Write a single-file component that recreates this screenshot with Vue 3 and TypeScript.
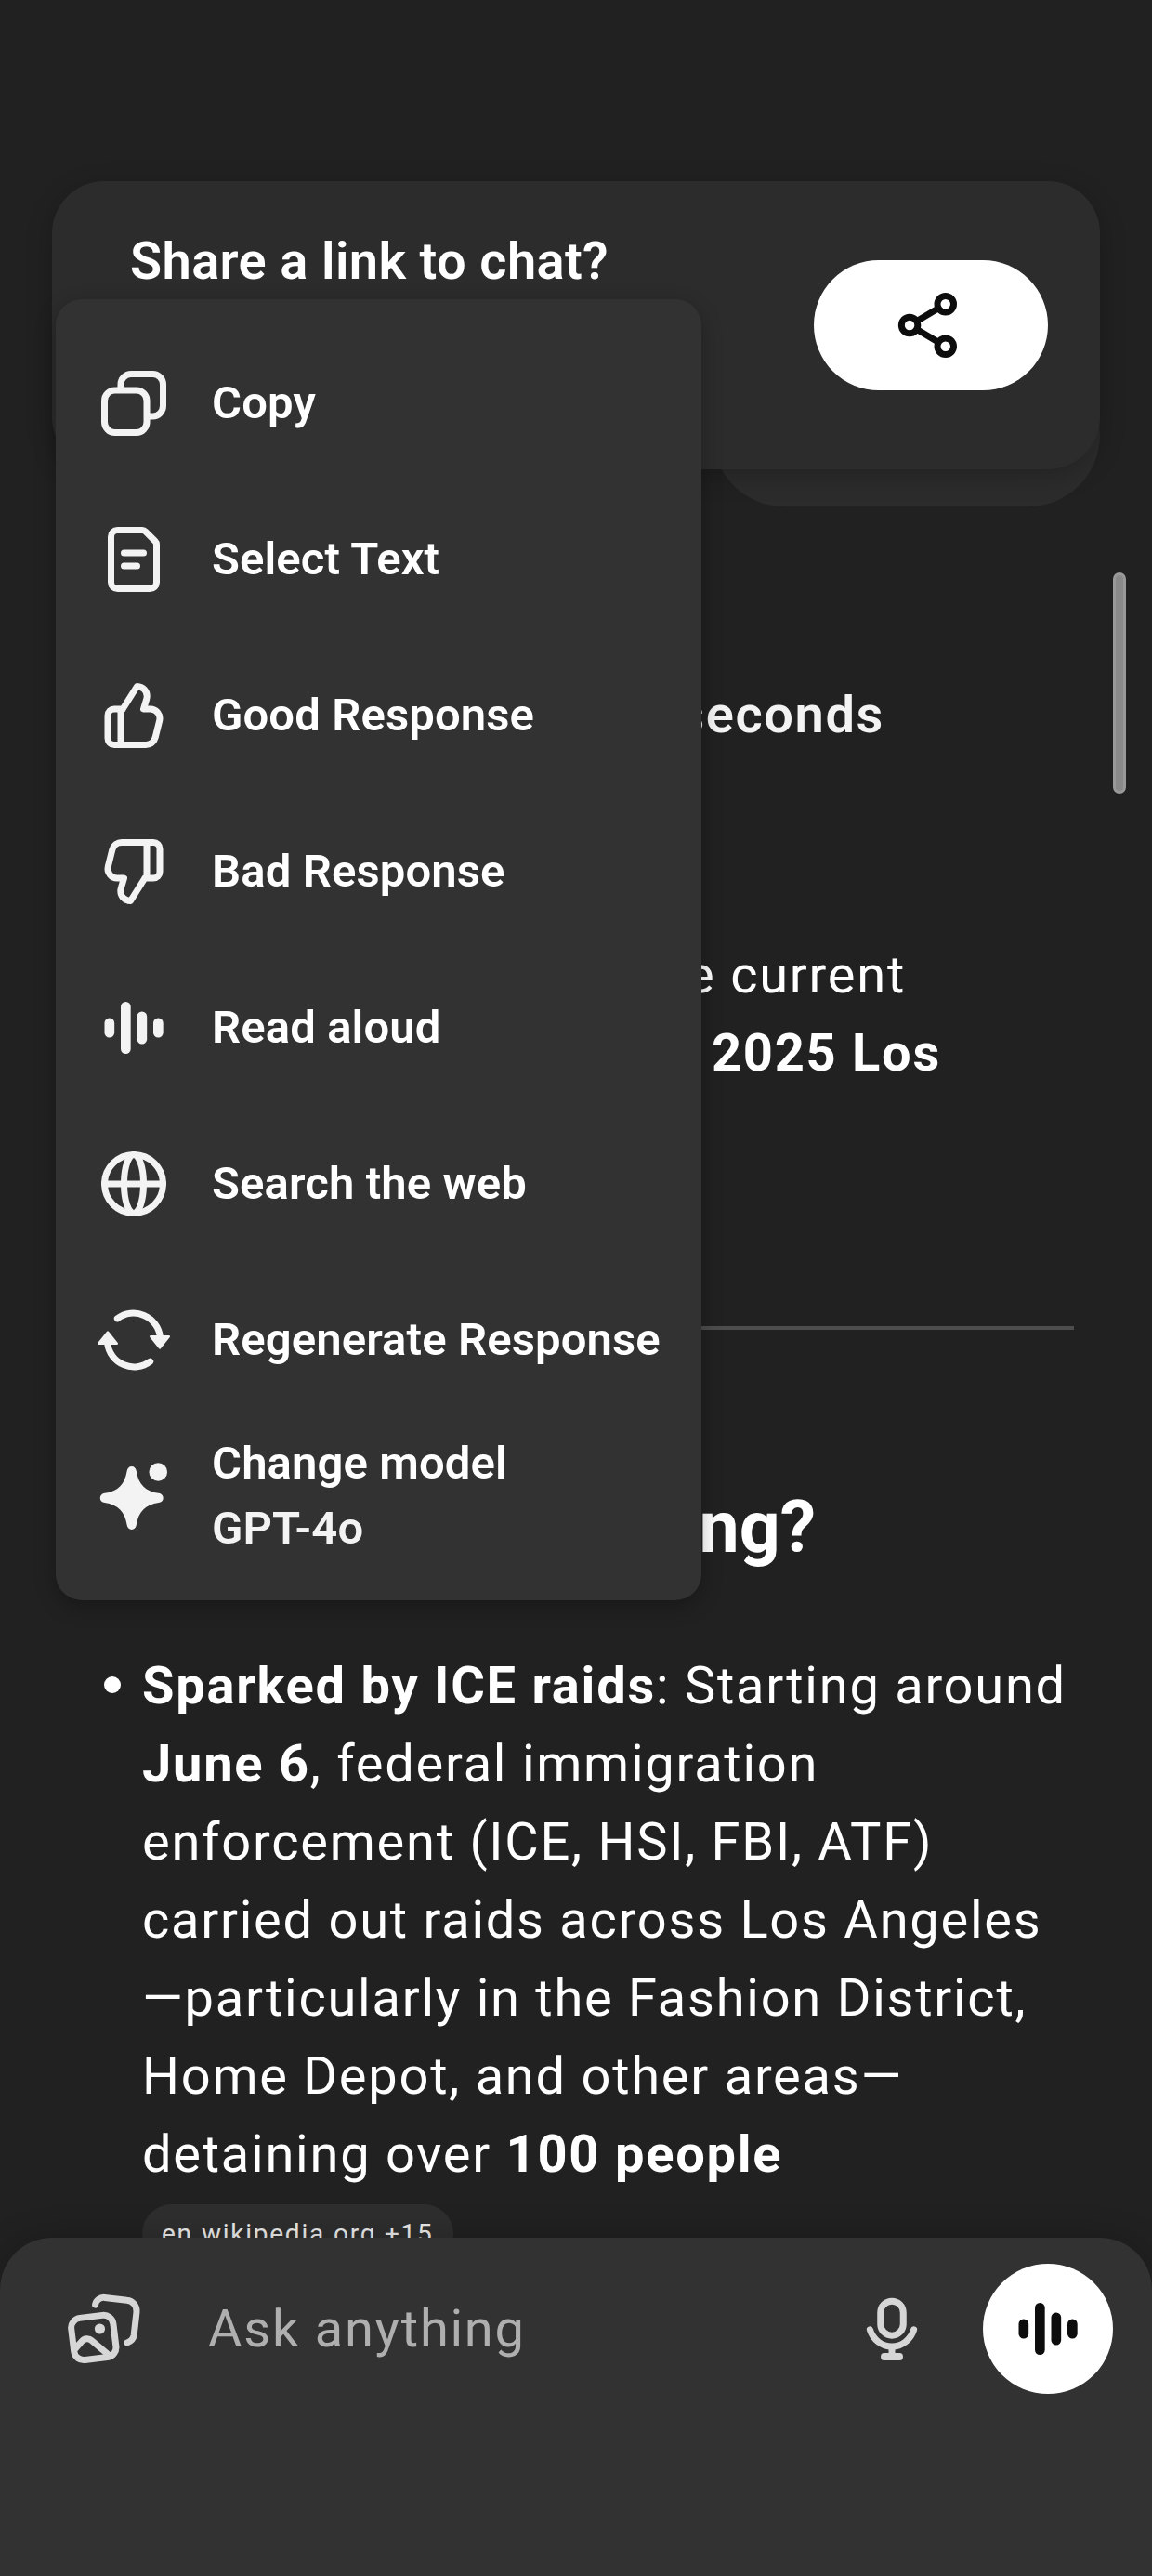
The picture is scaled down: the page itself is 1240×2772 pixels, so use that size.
<script setup lang="ts">
type IconName = 'copy' | 'doc' | 'up' | 'down' | 'wave' | 'globe' | 'regen' | 'spark'

interface MenuItem {
  icon: IconName
  label: string
  detail?: string
}

const items: MenuItem[] = [
  { icon: 'copy', label: 'Copy' },
  { icon: 'doc', label: 'Select Text' },
  { icon: 'up', label: 'Good Response' },
  { icon: 'down', label: 'Bad Response' },
  { icon: 'wave', label: 'Read aloud' },
  { icon: 'globe', label: 'Search the web' },
  { icon: 'regen', label: 'Regenerate Response' },
  { icon: 'spark', label: 'Change model', detail: 'GPT-4o' },
]

const bars = [
  { x: 3, y: 9, h: 6 },
  { x: 8, y: 4, h: 16 },
  { x: 13, y: 7, h: 10 },
  { x: 18, y: 9, h: 6 },
]

const thumb =
  'M8 21V10.4M8.6 10L13 3c1.8.1 3.05 1.4 3.05 3 0 .4-.05.7-.15 1L15 10h2.1a2.9 2.9 0 0 1 2.8 3.6l-1.3 5.2A3 3 0 0 1 15.7 21H6a2 2 0 0 1-2-2v-7a2 2 0 0 1 2-2h2.6'
</script>

<template>
  <div class="screen">
    <main class="chat">
      <div class="bubble"></div>
      <p class="thought">seconds</p>
      <div class="intro">
        <p class="l1">the current</p>
        <p class="l2"><b>2025 Los</b></p>
      </div>
      <div class="rule"></div>
      <h2>happening?</h2>
      <div class="bullet">
        <span class="dot"></span>
        <div class="body">
          <p>
            <b>Sparked by ICE raids</b>: Starting around<br />
            <b>June 6</b>, federal immigration<br />
            enforcement (ICE, HSI, FBI, ATF)<br />
            carried out raids across Los Angeles<br />
            —particularly in the Fashion District,<br />
            Home Depot, and other areas—<br />
            detaining over <b>100 people</b>
          </p>
          <span class="chip">en.wikipedia.org +15</span>
        </div>
      </div>
    </main>

    <div class="scrollbar"></div>

    <section class="share">
      <h1>Share a link to chat?</h1>
      <button class="share-btn">
        <svg class="icon line" viewBox="0 0 24 24">
          <circle cx="5.45" cy="12" r="2.5" />
          <circle cx="16.5" cy="5.5" r="2.5" />
          <circle cx="16.5" cy="18.5" r="2.5" />
          <path d="M7.7 10.7l6.6-3.9M7.7 13.3l6.6 3.9" stroke-linecap="butt" />
        </svg>
      </button>
    </section>

    <nav class="menu">
      <div v-for="item in items" :key="item.label" class="row">
        <svg class="icon line" viewBox="0 0 24 24">
          <template v-if="item.icon === 'copy'">
            <rect x="3" y="8" width="13" height="13" rx="3.2" />
            <path d="M8 7.5V6.2A3.2 3.2 0 0 1 11.2 3h6.6A3.2 3.2 0 0 1 21 6.2v6.6a3.2 3.2 0 0 1-3.2 3.2h-1.3" />
          </template>
          <template v-else-if="item.icon === 'doc'">
            <path d="M7 3h7.6a1.5 1.5 0 0 1 1.05.45l2.9 2.9A1.5 1.5 0 0 1 19 7.4V19a2 2 0 0 1-2 2H7a2 2 0 0 1-2-2V5a2 2 0 0 1 2-2z" />
            <path d="M9 10h6M9 14h4" />
          </template>
          <path v-else-if="item.icon === 'up'" :d="thumb" />
          <path v-else-if="item.icon === 'down'" :d="thumb" transform="rotate(180 12 12)" />
          <g v-else-if="item.icon === 'wave'" class="solid">
            <rect v-for="b in bars" :key="b.x" :x="b.x" :y="b.y" width="3.05" :height="b.h" rx="1.5" />
          </g>
          <template v-else-if="item.icon === 'globe'">
            <circle cx="12" cy="12" r="9" />
            <ellipse cx="12" cy="12" rx="3" ry="9" />
            <path d="M3 12h18" />
          </template>
          <template v-else-if="item.icon === 'regen'">
            <path d="M6.95 5.4A8.25 8.25 0 0 1 20.1 11" />
            <path d="M17.05 18.6A8.25 8.25 0 0 1 3.9 13" />
            <path class="tip" d="M17.2 10.9h5.6L20 14.4z" />
            <path class="tip" d="M6.8 13.1H1.2L4 9.6z" />
          </template>
          <g v-else class="solid">
            <circle cx="19.5" cy="4.55" r="2.8" />
            <path
              transform="translate(11.35 12.55)"
              d="M0-9.7C.8-9.7 1.3-9.1 1.45-8.3C2.1-4.2 4.2-2.1 8.3-1.45C9.1-1.3 9.7-.8 9.7 0S9.1 1.3 8.3 1.45C4.2 2.1 2.1 4.2 1.45 8.3C1.3 9.1.8 9.7 0 9.7S-1.3 9.1-1.45 8.3C-2.1 4.2-4.2 2.1-8.3 1.45C-9.1 1.3-9.7.8-9.7 0S-9.1-1.3-8.3-1.45C-4.2-2.1-2.1-4.2-1.45-8.3C-1.3-9.1-.8-9.7 0-9.7z"
            />
          </g>
        </svg>
        <div class="text">
          <span>{{ item.label }}</span>
          <span v-if="item.detail" class="detail">{{ item.detail }}</span>
        </div>
      </div>
    </nav>

    <footer class="composer">
      <svg class="icon line" viewBox="0 0 24 24">
        <rect x="2.3" y="8.2" width="13" height="13" rx="3" transform="rotate(-7 8.8 14.7)" />
        <circle class="solid" cx="10.7" cy="12" r="1.6" />
        <path d="M2.9 18.4l2.3-2.6a2.1 2.1 0 0 1 3-.2l5.4 4.6" stroke-linecap="butt" />
        <path d="M9.3 4.6c.2-1.4 1.5-2.3 2.9-2.2l6.8.8a3.3 3.3 0 0 1 3 3.6l-.8 7.1c-.15 1.1-1 2-2.1 2.4" />
      </svg>
      <span class="placeholder">Ask anything</span>
      <svg class="icon line mic" viewBox="0 0 24 24">
        <rect x="8.5" y="3.5" width="7" height="10.55" rx="3.5" />
        <path d="M5.25 12.25C6.2 15.3 8.9 17.45 12 17.45s5.8-2.15 6.75-5.2" />
        <path d="M12 17.5v3" stroke-linecap="butt" />
        <rect class="solid" x="8.6" y="19.4" width="6.8" height="2.3" rx="1" />
      </svg>
      <button class="voice">
        <svg class="icon line" viewBox="0 0 24 24">
          <g class="solid">
            <rect v-for="b in bars" :key="b.x" :x="b.x" :y="b.y" width="3.05" :height="b.h" rx="1.5" />
          </g>
        </svg>
      </button>
    </footer>
  </div>
</template>

<style>
body {
  margin: 0;
  background: #212121;
}
</style>

<style scoped>
.screen {
  position: relative;
  width: 1240px;
  height: 2772px;
  overflow: hidden;
  background: #212121;
  color: #fff;
  font-family: Roboto, 'Liberation Sans', sans-serif;
  font-size: 56px;
  line-height: 84px;
  letter-spacing: 1.75px;
}
p,
h1,
h2 {
  margin: 0;
  white-space: nowrap;
}
b {
  font-weight: 700;
}
button {
  display: flex;
  align-items: center;
  justify-content: center;
  padding: 0;
  border: 0;
  background: #fff;
  color: #0d0d0d;
}
.icon {
  display: block;
  flex: none;
  width: 84px;
  height: 84px;
}
.line {
  fill: none;
  stroke: currentColor;
  stroke-width: 2;
  stroke-linecap: round;
  stroke-linejoin: round;
}
.solid {
  fill: currentColor;
  stroke: none;
}
.tip {
  fill: currentColor;
  stroke-width: 0.7;
}

.chat {
  display: flex;
  flex-direction: column;
  padding: 391px 56px 0 84px;
}
.bubble {
  align-self: flex-end;
  width: 417px;
  height: 154px;
  border-radius: 77px;
  background: #2c2c2c;
}
.thought {
  width: 868px;
  margin-top: 182px;
  text-align: right;
  font-weight: 600;
  letter-spacing: 1.6px;
  color: #f3f3f3;
}
.intro {
  margin-top: 196px;
  text-align: right;
}
.l1 {
  width: 891px;
}
.l2 {
  width: 929px;
}
.rule {
  width: 1072px;
  height: 4px;
  margin-top: 252px;
  background: #4d4d4d;
}
h2 {
  width: 794px;
  margin-top: 164px;
  text-align: right;
  font-size: 77px;
  line-height: 98px;
  font-weight: 700;
  letter-spacing: 0;
}
.bullet {
  display: flex;
  margin-top: 79px;
  padding-left: 28px;
}
.dot {
  flex: none;
  width: 18px;
  height: 18px;
  margin: 32px 23px 0 0;
  border-radius: 50%;
  background: #fff;
}
.body {
  display: flex;
  flex-direction: column;
  align-items: flex-start;
}
.chip {
  height: 63px;
  margin-top: 12px;
  padding: 0 21px;
  border-radius: 32px;
  background: #2e2e2e;
  color: #ececec;
  font-size: 28px;
  line-height: 63px;
  white-space: nowrap;
}

.scrollbar {
  position: absolute;
  top: 616px;
  right: 28px;
  box-sizing: border-box;
  width: 14px;
  height: 238px;
  border: 3px solid #999;
  border-radius: 7px;
  background: #8a8a8a;
}

.share {
  position: absolute;
  top: 195px;
  left: 56px;
  display: flex;
  align-items: center;
  justify-content: space-between;
  box-sizing: border-box;
  width: 1128px;
  height: 310px;
  padding: 0 56px 0 84px;
  border-radius: 56px;
  background: #2c2c2c;
  box-shadow: 0 7px 28px rgba(0, 0, 0, 0.22);
}
h1 {
  align-self: flex-start;
  margin-top: 44px;
  font-size: 56px;
  font-weight: 600;
  letter-spacing: 0.35px;
}
.share-btn {
  width: 252px;
  height: 140px;
  border-radius: 70px;
}

.menu {
  position: absolute;
  top: 322px;
  left: 60px;
  box-sizing: border-box;
  width: 695px;
  padding: 28px 0;
  border-radius: 28px;
  background: #323232;
  box-shadow: 0 7px 22px rgba(0, 0, 0, 0.28);
}
.row {
  display: flex;
  align-items: center;
  gap: 42px;
  height: 168px;
  padding-left: 42px;
  color: #f3f3f3;
}
.text {
  display: flex;
  flex-direction: column;
  font-size: 49px;
  line-height: 70px;
  font-weight: 600;
  letter-spacing: 0.12px;
  white-space: nowrap;
  color: #fff;
}
.detail {
  color: #f3f3f3;
}

.composer {
  position: absolute;
  bottom: 0;
  left: 0;
  display: flex;
  align-items: flex-start;
  box-sizing: border-box;
  width: 1240px;
  height: 364px;
  padding: 56px 42px 0 70px;
  border-radius: 56px 56px 0 0;
  background: #323232;
  color: #d6d6d6;
  box-shadow: 0 0 35px rgba(0, 0, 0, 0.22);
}
.placeholder {
  flex: 1;
  margin-left: 70px;
  color: #afafaf;
}
.mic {
  margin-right: 56px;
}
.voice {
  width: 140px;
  height: 140px;
  margin-top: -28px;
  border-radius: 50%;
}
</style>
